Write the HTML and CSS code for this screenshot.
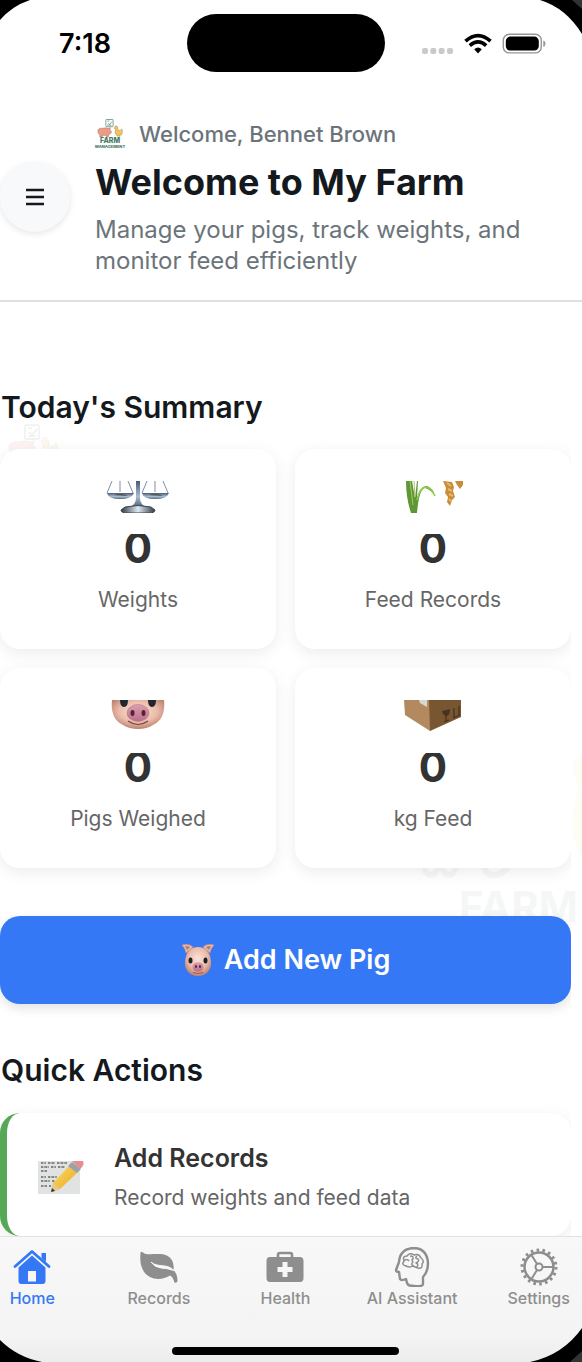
FILE: index.html
```html
<!DOCTYPE html>
<html lang="en">
<head>
<meta charset="utf-8">
<meta name="viewport" content="width=device-width, initial-scale=1">
<title>My Farm</title>
<link rel="stylesheet" href="styles.css">
</head>
<body>
<svg class="defs" width="0" height="0" aria-hidden="true">
  <defs>
    <radialGradient id="skin" cx=".5" cy=".4" r=".6"><stop offset="0" stop-color="#fbe3da"/><stop offset=".6" stop-color="#ecbcab"/><stop offset="1" stop-color="#bd8270"/></radialGradient>
    <linearGradient id="snout" x2="0" y2="1"><stop offset="0" stop-color="#dd9fb0"/><stop offset="1" stop-color="#b96f8a"/></linearGradient>
    <linearGradient id="steel" x2="0" y2="1"><stop offset="0" stop-color="#465a78"/><stop offset=".6" stop-color="#a9bdd0"/><stop offset="1" stop-color="#50627a"/></linearGradient>
    <linearGradient id="base"><stop offset="0" stop-color="#303943"/><stop offset=".5" stop-color="#dceaf3"/><stop offset="1" stop-color="#303943"/></linearGradient>
    <linearGradient id="pen" x2="1" y2="1"><stop offset="0" stop-color="#ffe067"/><stop offset="1" stop-color="#e5a41f"/></linearGradient>
    <symbol id="pig" viewBox="0 0 34 34">
      <path d="M1 2Q8 0 12 4L5 10Q4 5 1 2ZM33 2Q26 0 22 4L29 10Q30 5 33 2Z" fill="#e9b9aa" stroke="#c08b7c" stroke-width=".7"/>
      <path d="M4 3Q7 3 9 4L6 7ZM30 3Q27 3 25 4L28 7Z" fill="#b27b70"/>
      <path d="M17 4C25 4 29 9 30 18C31 27 25 33 17 33S3 27 4 18C5 9 9 4 17 4Z" fill="url(#skin)"/>
      <ellipse cx="9.500" cy="17.500" rx="2" ry="3" fill="#1b2026"/><ellipse cx="24.500" cy="17.500" rx="2" ry="3" fill="#1b2026"/>
      <ellipse cx="17" cy="24" rx="5.500" ry="4.800" fill="url(#snout)"/>
      <ellipse cx="15" cy="23.500" rx="1" ry="1.600" fill="#55202f"/><ellipse cx="19" cy="23.500" rx="1" ry="1.600" fill="#55202f"/>
      <path d="M12 29.500Q17 31.500 22 29.500" fill="none" stroke="#874b4a" stroke-width=".8"/>
    </symbol>
    <symbol id="animals" viewBox="0 0 50 50">
      <g fill="none" stroke="#477a64" stroke-width="1.300"><rect x="17" y="1" width="14" height="14" rx="1"/><path d="M20 4H24M20 12H28M21 8L24 11L29 5"/></g>
      <path d="M1 24Q1 17 10 18Q17 16 22 18L26 17L25 21Q28 23 28 27L25 29Q23 31 22 31V35H18V32H10V35H5V31Q1 29 1 24Z" fill="#ed9a86" stroke="#7a5a50" stroke-width=".6"/>
      <path d="M35 14Q39 12 40 16L41 22Q45 24 48 19Q52 25 47 31Q42 35 37 31Q33 27 36 20L33 18Z" fill="#f0c45c" stroke="#81683a" stroke-width=".6"/>
      <path d="M40 33V36M44 33V36" stroke="#b98234"/>
    </symbol>
  </defs>
</svg>
<div class="screen">
  <header class="status">
    <time class="clock">7:18</time>
    <span class="island"></span>
    <span class="signals">
      <svg width="126" height="24" viewBox="0 0 126 24" aria-label="Signal, Wi-Fi and battery">
        <g fill="#cacaca"><rect x="1" y="15" width="6" height="6" rx="2"/><rect x="9.300" y="15" width="6" height="6" rx="2"/><rect x="17.600" y="15" width="6" height="6" rx="2"/><rect x="26" y="15" width="6" height="6" rx="2"/></g>
        <g fill="none" stroke="#000" stroke-width="3.600"><path d="M44.500 8.200Q57 -3 69.500 8.200"/><path d="M48.800 12.600Q57 5.300 65.200 12.600"/></g>
        <path d="M53.200 16.200Q57 13 60.800 16.200L57 20.500Z"/>
        <rect x="82.300" y="1.300" width="38" height="18.600" rx="6" fill="#fff" stroke="#969696" stroke-width="1.400"/><rect x="84.800" y="3.600" width="33" height="14" rx="4.500"/><path d="M122.300 7.500Q124.500 8 124.500 10.500T122.300 14Z" fill="#969696"/>
      </svg>
    </span>
  </header>

  <div class="intro">
    <button class="menu" aria-label="Open menu"><svg width="18" height="18" viewBox="0 0 18 18"><path d="M0 2H18M0 9H18M0 16H18" stroke="#14191e" stroke-width="2.400"/></svg></button>
    <div class="intro-text">
      <div class="greeting">
        <span class="brand" aria-hidden="true"><svg width="26" height="19" viewBox="0 0 50 37"><use href="#animals" width="50" height="50"/></svg><span class="brand-name">FARM</span><span class="brand-sub">MANAGEMENT</span></span>
        <span>Welcome, Bennet Brown</span>
      </div>
      <h1>Welcome to My Farm</h1>
      <p>Manage your pigs, track weights, and monitor feed efficiently</p>
    </div>
  </div>

  <main>
    <svg class="mark mark-small" width="50" height="50" aria-hidden="true"><use href="#animals"/></svg>
    <div class="mark mark-large" aria-hidden="true">
      <svg width="160" height="130" viewBox="0 0 160 130"><path d="M160 2Q150 2 152 18L156 34Q146 79 154 90Q156 100 160 102Z" fill="#ecc94c"/><path d="M2 113Q4 121 9 121T16 113M20 113Q22 121 27 121T34 113M62 113Q64 121 72 121T86 113" fill="none" stroke="#66756d" stroke-width="6"/></svg>
      <span>FARM</span>
    </div>
    <div class="content">
      <h2>Today's Summary</h2>
      <section class="stats">
        <article class="card stat">
          <svg width="64" height="32" viewBox="0 0 64 32"><path d="M6 0L1 12M14 0V11M22 0L27 12M41 0L36 12M49 0V11M57 0L62 12" fill="none" stroke="#7d8fa5" stroke-width="1"/><path d="M1 12H28Q26 18 14 18T1 12ZM36 12H63Q61 18 49 18T36 12Z" fill="url(#steel)"/><path d="M8 14Q15 11 22 15ZM43 14Q50 11 57 15Z" fill="#55565a"/><path d="M30 0H34V17Q34 24 41 26H23Q30 24 30 17Z" fill="url(#steel)"/><path d="M19 26Q32 23 45 26L49 29Q49 32 43 32H21Q15 32 15 29Z" fill="url(#base)" stroke="#39444f"/></svg>
          <strong>0</strong><span>Weights</span>
        </article>
        <article class="card stat">
          <svg width="64" height="32" viewBox="0 0 64 32"><path d="M5 0H11L14 17L16 0H17L16 17Q20 4 26 5Q32 7 34 15Q29 8 24 7Q18 8 16 32H10Q5 17 5 0Z" fill="#5e9638"/><path d="M9 0L12 24M13 0L14 16" stroke="#a7c762" fill="none"/><path d="M16 19Q19 6 25 6Q31 8 34 15" fill="none" stroke="#8fce45" stroke-width="1.500"/><path d="M42 0L51 1L53 6L52 10L54 16L51 19L49 25L46 21L47 16L44 12L45 7Z" fill="#c98c38"/><path d="M46 2L50 5M47 8L51 10M48 13L52 15M48 18L50 20" fill="none" stroke="#e4b96a" stroke-width="2"/><path d="M54 0H62V4L59 8L56 4Z" fill="#c98c38"/></svg>
          <strong>0</strong><span>Feed Records</span>
        </article>
        <article class="card stat">
          <svg width="64" height="32" viewBox="0 0 64 32"><path d="M6 0H58Q60 19 47 25Q41 29 32 29T17 25Q4 19 6 0Z" fill="url(#skin)"/><path d="M14 0H22Q22 7 18 7T14 0ZM42 0H50Q50 7 46 7T42 0Z" fill="#20262b"/><ellipse cx="32" cy="13" rx="11" ry="8.500" fill="url(#snout)" stroke="#b97a83" stroke-width=".6"/><ellipse cx="26.500" cy="13" rx="2" ry="3" fill="#582030"/><ellipse cx="37.500" cy="13" rx="2" ry="3" fill="#582030"/><path d="M22 21Q32 28 42 21" fill="none" stroke="#72433e" stroke-width="1.200"/></svg>
          <strong>0</strong><span>Pigs Weighed</span>
        </article>
        <article class="card stat">
          <svg width="64" height="32" viewBox="0 0 64 32"><path d="M3 0H29V31L4 15Z" fill="#b38a60"/><path d="M28 0H60V17L29 31Z" fill="#795632"/><path d="M18 0H26V7L19 3Z" fill="#d5d7d5"/><path d="M41 11L49 9Q49 15 46 16Q42 16 41 11Z" fill="#49331e"/><path d="M45 15V21M43 22L48 20M53 8V17M58 6V15M52 18L59 15" stroke="#49331e" stroke-width="1.300" fill="none"/></svg>
          <strong>0</strong><span>kg Feed</span>
        </article>
      </section>
      <button class="add"><svg width="34" height="34" aria-hidden="true"><use href="#pig"/></svg><span>Add New Pig</span></button>
      <h2>Quick Actions</h2>
      <a class="card action" href="#records">
        <svg width="48" height="36" viewBox="0 0 48 36" aria-hidden="true"><rect x="1" y="1" width="42" height="33" fill="#e1e2e2"/><path d="M4 3H9M11 3H18M20 3H30M4 7H12M14 7H19M21 7H28M4 11H10M4 17H9M11 17H20M4 21H13M15 21H18M4 26H10M12 26H14" fill="none" stroke="#666" stroke-width="1.600" stroke-dasharray="2 .6 1 .5"/><path d="M14 32L16 23L34 4L42 11L23 29Z" fill="url(#pen)"/><path d="M14 32L16 23L23 29Z" fill="#e6c792"/><path d="M14 32L15 28L18 31Z" fill="#333"/><path d="M31 6L35 2L44 9L40 13Z" fill="#9aa1a8"/><path d="M35 1H46Q48 5 43 9Z" fill="#e68d91"/></svg>
        <span class="action-text"><strong>Add Records</strong><span>Record weights and feed data</span></span>
      </a>
    </div>
  </main>

  <nav class="tabs" aria-label="Main">
    <a class="tab active" href="#home"><svg width="40" height="40" viewBox="0 0 40 40"><path d="M3 19.500L20 4.500L37 19.500" fill="none" stroke="currentColor" stroke-width="2.800" stroke-linecap="round" stroke-linejoin="round"/><path d="M29.500 6H34V15L29.500 11Z" fill="currentColor"/><path d="M6.500 20.500L20 8.500L33.500 20.500V34Q33.500 37 30.500 37H9.500Q6.500 37 6.500 34ZM16 24V34.500H24V24Z" fill="currentColor" fill-rule="evenodd"/></svg><span>Home</span></a>
    <a class="tab" href="#records"><svg width="40" height="40" viewBox="0 0 40 40"><path d="M1.500 5.500Q2 4 4 5.500C8 9 17 6 25 7.500C32 9 35.500 15 34.500 23Q38.500 27 38.500 34Q38 36.500 35.500 35.500Q34 30 31 28.500C22 34 10 33 4.500 24C1 18 1 12 1.500 5.500Z" fill="currentColor"/><path d="M12 15C18 21 28 16 35 23.500Q27 21 22 21Q15 20 12 15Z" fill="#f7f7f7" stroke="#f7f7f7"/></svg><span>Records</span></a>
    <a class="tab" href="#health"><svg width="40" height="40" viewBox="0 0 40 40"><path d="M13 12V8Q13 6 15 6H25Q27 6 27 8V12" fill="none" stroke="currentColor" stroke-width="2.600"/><path fill-rule="evenodd" d="M5 10H35Q38.500 10 38.500 14V31Q38.500 35 35 35H5Q1.500 35 1.500 31V14Q1.500 10 5 10ZM17.500 15V20H12.500V25H17.500V30H22.500V25H27.500V20H22.500V15Z" fill="currentColor"/></svg><span>Health</span></a>
    <a class="tab" href="#assistant"><svg width="40" height="40" viewBox="0 0 40 40"><g fill="none" stroke="currentColor" stroke-linejoin="round"><path d="M31 37V30Q36 25 36 16Q35 1 21 1Q8 2 7 15L4 23Q4 25 7 25L8 32Q9 34 14 32L15 36Q16 39 22 39Q31 40 31 37Z" stroke-width="2.400"/><path d="M14 19Q9 18 12 14Q10 9 15 9Q18 5 22 8Q27 6 29 11Q33 14 30 17Q31 22 26 21Q23 20 21 19Q18 21 14 19ZM12 14Q15 11 17 14M18 9Q22 9 21 12Q19 13 21 15Q18 18 22 19M25 9Q22 11 26 12Q28 14 24 16Q27 17 25 20" stroke-width="1.500"/></g></svg><span>AI Assistant</span></a>
    <a class="tab" href="#settings"><svg width="40" height="40" viewBox="0 0 40 40"><g fill="none" stroke="currentColor"><circle cx="20" cy="20" r="17" stroke-width="3" stroke-dasharray="2.600 3.333"/><circle cx="20" cy="20" r="14.500" stroke-width="2.500"/><circle cx="20" cy="20" r="3.500" stroke-width="2"/><path d="M23.500 20H34M18 17L12.500 8M18 23L12.500 32" stroke-width="2"/></g></svg><span>Settings</span></a>
  </nav>
  <div class="home-bar"></div>

  <svg class="corner tl" width="30" height="20" viewBox="0 0 30 20"><path d="M0 0H30Q12 6 0 20Z"/></svg>
  <svg class="corner tr" width="42" height="34" viewBox="0 0 42 34"><path d="M0 0H42V34Q26 8 0 0Z"/><path d="M32 0H42V9Z" fill="#333"/></svg>
  <svg class="corner bl" width="42" height="22" viewBox="0 0 42 22"><path d="M0 0Q17 17 42 22H0Z"/></svg>
  <svg class="corner br" width="52" height="34" viewBox="0 0 52 34"><path d="M0 34Q33 27 52 0V34Z"/><path d="M40 34L52 23V34Z" fill="#333"/></svg>
</div>
</body>
</html>
```

FILE: styles.css
```css
* { box-sizing: border-box; }
body { margin: 0; background: #fff; color: #14191e; font-family: Inter, "Liberation Sans", sans-serif; }
h1, h2, p { margin: 0; }
a { color: inherit; text-decoration: none; }
button { border: 0; padding: 0; font: inherit; cursor: pointer; }
svg { display: block; flex: none; }
.defs { position: absolute; }

.screen { position: relative; display: flex; flex-direction: column; min-height: 100vh; overflow: hidden; }
.corner { position: absolute; z-index: 3; }
.tl { top: 0; left: 0; }
.tr { top: 0; right: 0; }
.bl { bottom: 0; left: 0; }
.br { bottom: 0; right: 0; }

.status { display: grid; grid-template-columns: 1fr 198px 1fr; align-items: center; padding: 14px 11px 0 0; }
.clock { padding: 2px 0 0 59px; color: #000; font-size: 27px; font-weight: 600; line-height: 32px; }
.island { height: 58px; border-radius: 29px; background: #000; }
.signals { justify-self: end; padding: 3px 24px 0 0; }

.intro { display: flex; align-items: center; gap: 25px; padding: 45px 32px 24px 0; border-bottom: 2px solid #e0e0e2; }
.menu { display: grid; place-items: center; flex: none; width: 70px; height: 70px; border-radius: 50%; background: #f8f9fb; box-shadow: 0 2px 6px rgb(0 0 0 / 10%); }
.intro-text { color: #6c747b; }
.greeting { display: flex; align-items: center; gap: 14px; font-size: 22px; font-weight: 500; line-height: 34px; }
.brand { display: flex; flex-direction: column; align-items: center; width: 30px; color: #477a64; font-weight: 800; }
.brand-name { font-size: 7px; line-height: 6px; }
.brand-sub { font-size: 4px; line-height: 5px; }
h1 { margin: 8px 0 9px; color: #14191e; font-size: 36px; font-weight: 700; line-height: 46px; }
.intro p { font-size: 24px; line-height: 31px; }

main { position: relative; flex: 1; }
.mark { position: absolute; opacity: .1; }
.mark-small { top: 122px; left: 8px; }
.mark-large { top: 452px; right: 0; width: 160px; opacity: .05; color: #477a64; font-size: 42px; font-weight: 700; line-height: 46px; }
.mark-large span { display: block; padding-left: 37px; }
.content { position: relative; margin-right: 11px; padding-top: 85px; overflow: hidden; }
h2 { padding-left: 1px; font-size: 30px; font-weight: 600; line-height: 40px; }
.card { border-radius: 20px; background: #fff; box-shadow: 0 4px 16px rgb(0 0 0 / 8%); }
.stats { display: grid; grid-template-columns: 1fr 1fr; gap: 19px; margin: 22px 0 48px; }
.stat { display: flex; flex-direction: column; align-items: center; padding: 32px 16px 28px; }
.stat strong { margin: 21px 0 9px; padding-bottom: 8px; overflow: hidden; color: #333; font-size: 42px; font-weight: 700; line-height: 28px; }
.stat span { color: #666; font-size: 21px; line-height: 42px; }
.add { display: flex; align-items: center; justify-content: center; gap: 9px; width: 100%; margin-bottom: 46px; padding: 24px; border-radius: 20px; background: #3478f6; box-shadow: 0 4px 12px rgb(0 0 0 / 12%); color: #fff; font-size: 27px; font-weight: 600; line-height: 40px; }
.action { display: flex; align-items: center; gap: 29px; margin-top: 23px; padding: 26px 30px 19px; border-left: 7px solid #55a855; }
.action-text { display: flex; flex-direction: column; color: #666; font-size: 21px; line-height: 39px; }
.action-text strong { color: #333; font-size: 25px; font-weight: 600; }

.tabs { position: relative; display: grid; grid-template-columns: repeat(5, 1fr); margin: 0 -20px 0 -31px; padding: 10px 0 53px; border-top: 1px solid #e2e2e2; background: linear-gradient(#f8f8f8, #f4f4f4 80%, #ececec); }
.tab { display: flex; flex-direction: column; align-items: center; color: #8e8e8e; font-size: 16px; font-weight: 500; line-height: 22px; }
.tab.active { color: #3478f6; }
.home-bar { position: absolute; z-index: 2; bottom: 7px; left: 0; right: 12px; width: 227px; height: 8px; margin: auto; border-radius: 4px; background: #000; }
```
